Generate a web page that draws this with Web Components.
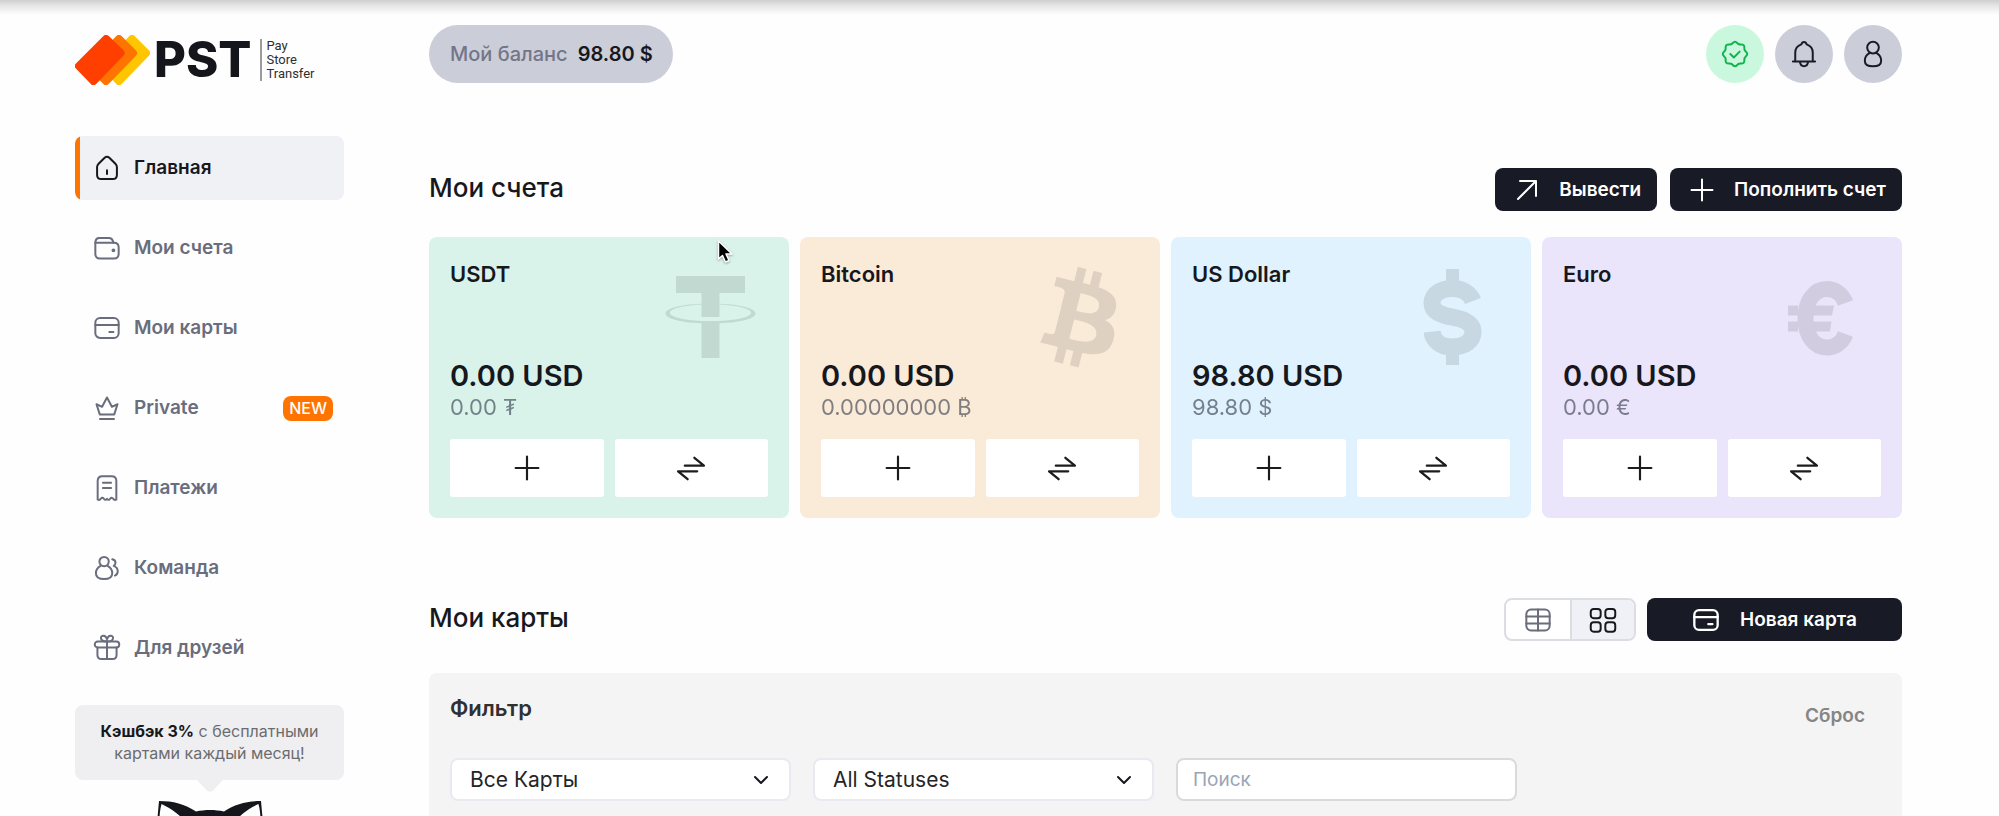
<!DOCTYPE html>
<html lang="ru">
<head>
<meta charset="utf-8">
<meta name="viewport" content="width=device-width, initial-scale=1">
<title>PST</title>
<style>
  html, body { margin: 0; }
  body { font-family: Inter, "Liberation Sans", sans-serif; color: #16181d; background: #fefefe; }
</style>
</head>
<body>
<pst-app></pst-app>

<script>
const ICONS = {
  home: '<path d="M3.5 11.2c0-1.2.5-2 1.3-2.8L10 3.200c1.200-1.100 2.800-1.100 4 0l5.200 5.200c.8.8 1.300 1.600 1.300 2.800V18c0 2-1.300 3.500-3.500 3.500H7c-2.200 0-3.500-1.500-3.500-3.500z"/><path d="M12 14v3.200"/>',
  wallet: '<path d="M2 7.500V17c0 2.500 1.500 4 4 4h12c2.500 0 4-1.500 4-4v-5.500c0-2.500-1.500-4-4-4z"/><path d="M2 7.500C2 5 3.300 3.500 5.500 3.500h8C15.700 3.500 17 5 17.500 7.500"/><circle cx="17.500" cy="14" r=".8" fill="currentColor"/>',
  card: '<rect x="2" y="3.500" width="20" height="17" rx="4"/><path d="M2 9.500h20M14 15.500h3.500"/>',
  crown: '<path d="M5.800 17.500 3 8.800l4.800 2.200L12 3l4.200 8L21 8.800l-2.800 8.700zM6 21.500h12"/>',
  receipt: '<path d="M4 22V6c0-2.500 1.500-4 4-4h8c2.500 0 4 1.500 4 4v16c-1.400.5-2 .3-2.700-.8-.8-1.200-1.800-1.200-2.600 0-.8 1.300-1.900 1.300-2.700 0-.8 1.300-1.900 1.300-2.700 0-.8-1.200-1.800-1.200-2.600 0C6 22.300 5.400 22.500 4 22zM8.500 7.500h7M8.500 12h7"/>',
  team: '<circle cx="9.500" cy="6.500" r="4"/><path d="M6.500 10.200C4 11.500 2.500 14 2.500 16.500 2.500 20 5 21.500 9.500 21.500s7-1.500 7-5c0-2.500-1.500-5-4-6.300"/><path d="M16.500 4.500c1.800.4 2.800 1.500 2.800 3 0 1.100-.5 2-1.500 2.700 2.300 1 3.400 2.600 3.400 4.500 0 2-.9 3.200-2.400 3.800"/>',
  gift: '<path d="M3.800 11.500V18c0 2.200 1.300 3.500 3.500 3.500h9.400c2.200 0 3.500-1.300 3.500-3.500v-6.500M12 6v15.500"/><rect x="1.500" y="6.500" width="21" height="5" rx="2.500"/><path d="M12 6.500C8 6.500 6.800 5 6.800 3.300 6.800 1 11 .5 12 4.500 13 .5 17.200 1 17.200 3.300 17.200 5 16 6.500 12 6.500z"/>',
  verified: '<path d="M12 1.500c1.500 0 2 1.600 3.400 2.100 1.400.5 2.900-.3 4 .8s.3 2.600.8 4c.5 1.400 2.300 2.100 2.300 3.600s-1.800 2.200-2.300 3.600c-.5 1.400.3 2.900-.8 4s-2.600.3-4 .8c-1.400.5-1.900 2.100-3.400 2.100s-2-1.600-3.400-2.100c-1.400-.5-2.900.3-4-.8s-.3-2.600-.8-4C3.300 14.200 1.500 13.500 1.500 12s1.800-2.200 2.300-3.600c.5-1.400-.3-2.900.8-4s2.600-.3 4-.8C10 3.100 10.500 1.500 12 1.500z"/><path d="m8 12 3 3 5-5"/>',
  bell: '<path d="M2.500 18.500h19M4.500 18.500V11c0-3.500 2.200-6.200 5.200-7.200.4-1.300 1.200-2.100 2.300-2.100s1.900.8 2.300 2.100c3 1 5.200 3.700 5.200 7.200v7.500M8.500 18.800c.3 2.300 1.500 3.700 3.500 3.700s3.200-1.400 3.500-3.700"/>',
  user: '<circle cx="12" cy="6.500" r="5"/><path d="M9 11.200C6.500 12.500 5 15 5 17.700c0 3.300 2 4.800 7 4.800s7-1.500 7-4.800c0-2.700-1.500-5.200-4-6.500"/>',
  plus: '<path d="M12 1.500v21M1.500 12h21"/>',
  out: '<path d="M3 21 21 3M5 3h16v15"/>',
  swap: '<path d="M6.500 9.500H23.500L15 2.500M17.500 14.500H.5L9 21.500"/>',
  table: '<rect x="2" y="3" width="20" height="18" rx="4"/><path d="M2 9h20M2 15h20M12 3v18"/>',
  grid: '<rect x="1.500" y="2.500" width="8.500" height="8" rx="2.500"/><rect x="14" y="2.500" width="8.500" height="8" rx="2.500"/><rect x="1.500" y="14" width="8.500" height="8" rx="2.500"/><rect x="14" y="14" width="8.500" height="8" rx="2.500"/>',
  chevron: '<path d="m6 9 6 6 6-6"/>'
};

const MARKS = {
  usdt: '<path d="M15 11h69v17H58.500v24h-18V28H15zM40.500 57.500h18V93h-18z"/><path fill-rule="evenodd" d="M49.500 38.500c25 0 45 4 45 10s-20 10-45 10-45-4-45-10 20-10 45-10zm0 1c-23 0-40.500 3.500-40.500 8.200s17.500 8.300 40.500 8.300S90 52.400 90 47.700 72.500 39.500 49.500 39.500z"/>',
  btc: '<path transform="translate(-33 -28.500) scale(5.050)" d="M23.189 14.020c.314-2.096-1.283-3.223-3.465-3.975l.708-2.840-1.728-.430-.690 2.765c-.454-.114-.920-.220-1.385-.326l.695-2.783L15.596 6l-.708 2.839c-.376-.086-.746-.170-1.104-.260l.002-.009-2.384-.595-.460 1.846s1.283.294 1.256.312c.700.175.826.638.805 1.006l-.806 3.235c.048.012.110.030.180.057l-.183-.045-1.130 4.532c-.086.212-.303.531-.793.410.018.025-1.256-.313-1.256-.313l-.858 1.978 2.250.561c.418.105.828.215 1.231.318l-.715 2.872 1.727.430.708-2.840c.472.127.930.245 1.378.357l-.706 2.828 1.728.430.715-2.866c2.948.558 5.164.333 6.097-2.333.752-2.146-.037-3.385-1.588-4.192 1.130-.260 1.980-1.003 2.207-2.538zm-3.950 5.538c-.533 2.147-4.148.986-5.320.695l.950-3.805c1.172.293 4.929.872 4.370 3.110zm.535-5.569c-.487 1.953-3.495.960-4.470.717l.860-3.450c.975.243 4.118.696 3.610 2.733z"/>',
  usd: '<path d="M43 4h13v13H43zM43 88h13v12H43z"/><path fill="none" stroke="#000" stroke-width="17" d="M70 36C67 28 59 23.500 49.500 23.500 37 23.500 29 29.500 29 38c0 9 9 12 20.500 14.200C62 54.500 70 58.500 70 67c0 9.500-9 15-20.500 15S30 76 29 66.700"/>',
  eur: '<path fill="none" stroke="#000" stroke-width="16" d="M71.500 38C68 28 60 24 53 24c-13 0-21.500 12-21.500 29.300S40 82.500 53 82.500c7 0 15-4 18.500-13.500"/><path d="M14 40.500h10v10H14zM39 40.500h21l-2 10H39zM14 56.500h10v10H14zM39 56.500h18.500l-1.500 10H39z"/>'
};

function define(name, css, html, setup, observed = []) {
  const template = document.createElement('template');
  template.innerHTML = `<style>*{box-sizing:border-box}${css}</style>${html}`;
  customElements.define(name, class extends HTMLElement {
    static observedAttributes = observed;
    constructor() {
      super();
      this.attachShadow({ mode: 'open' }).append(template.content.cloneNode(true));
    }
    connectedCallback() { if (setup) setup(this, this.shadowRoot); }
    attributeChangedCallback() { if (setup) setup(this, this.shadowRoot); }
  });
}

define('ui-icon',
  `:host{display:block;width:28px;height:28px;flex:none}
   svg{display:block;width:100%;height:100%;overflow:visible;fill:none;stroke:currentColor;stroke-width:var(--stroke,1.7);stroke-linecap:round;stroke-linejoin:round}`,
  `<svg viewBox="0 0 24 24" aria-hidden="true"></svg>`,
  (host, root) => { root.querySelector('svg').innerHTML = ICONS[host.getAttribute('name')] || ''; },
  ['name']);

define('pst-logo',
  `:host{display:block}
   a{display:flex;align-items:center;height:50px;color:inherit;text-decoration:none}
   svg{width:75px;height:50px;flex:none}
   b{margin-left:4px;font-size:49px;line-height:50px;font-weight:800;color:#14161b}
   span{margin-left:9px;padding-left:4px;border-left:2px solid #9b9b9d;font:13px/14px Roboto,sans-serif;color:#2e2e30}`,
  `<a href="#home"><svg viewBox="0 0 75 50" aria-hidden="true">
     <g stroke-width="8" stroke-linejoin="round">
     <path d="M57 4 71 18 44 46 30 32z" fill="#ffc600" stroke="#ffc600"/>
     <path d="M44 4 58 18 31 46 17 32z" fill="#ff7400" stroke="#ff7400"/>
     <path d="M31 4 45.500 18 18.500 46 4 31z" fill="#ff3f00" stroke="#ff3f00"/></g>
   </svg><b>PST</b><span>Pay<br>Store<br>Transfer</span></a>`);

define('nav-item',
  `:host{display:block}
   a{display:flex;align-items:center;height:64px;padding:0 11px 0 18px;border-radius:8px;color:#696d7c;font-size:19px;line-height:24px;font-weight:600;text-decoration:none}
   slot{display:block}
   .label{margin-left:13px;flex:1}
   :host([active]) a{background:linear-gradient(90deg,#ff7400 5px,#f0f1f5 5px);color:#16181d}`,
  `<a><ui-icon></ui-icon><span class="label"><slot></slot></span><slot name="badge"></slot></a>`,
  (host, root) => {
    root.querySelector('ui-icon').setAttribute('name', host.getAttribute('icon'));
    root.querySelector('a').href = '#' + host.getAttribute('icon');
  });

define('new-badge',
  `:host{display:block;padding:0 6px;border-radius:8px;background:#ff7400;color:#fff;font-size:16px;line-height:25px;font-weight:500}`,
  `<slot></slot>`);

define('promo-bubble',
  `:host{display:block;text-align:center}
   p{margin:0;padding:15px 8px 16px;border-radius:8px;background:#efeff1;color:#6c6c6e;font-size:16px;line-height:22px}
   ::slotted(b){color:#16181d;font-weight:700}
   svg{display:block;margin:0 auto}
   .fox{margin-top:9px}`,
  `<p><slot></slot></p>
   <svg width="26" height="12" viewBox="0 0 26 12" aria-hidden="true"><path d="M0 0h26l-9 9.500c-2.500 3-5.500 3-8 0z" fill="#efeff1"/></svg>
   <svg class="fox" width="106" height="56" viewBox="0 0 106 56" aria-hidden="true">
     <path d="M2 0C16 0 28 3 39 10.500 48 8.500 58 8.500 67 10.500 78 3 90 0 104 0l2 22v34H0V22z" fill="#14161b"/>
     <path d="M4.500 3C15 8 24 14 30 24L3 36C2 24 2 12 4.500 3zM101.500 3C91 8 82 14 76 24l27 12c1-12 1-24-1.500-33z" fill="#fefefe"/>
   </svg>`);

define('side-bar',
  `:host{display:block}
   nav{display:flex;flex-direction:column;gap:16px;margin:51px 0 25px}`,
  `<pst-logo></pst-logo>
   <nav>
     <nav-item icon="home" active>Главная</nav-item>
     <nav-item icon="wallet">Мои счета</nav-item>
     <nav-item icon="card">Мои карты</nav-item>
     <nav-item icon="crown">Private<new-badge slot="badge">NEW</new-badge></nav-item>
     <nav-item icon="receipt">Платежи</nav-item>
     <nav-item icon="team">Команда</nav-item>
     <nav-item icon="gift">Для друзей</nav-item>
   </nav>
   <promo-bubble><b>Кэшбэк 3%</b> с бесплатными<br>картами каждый месяц!</promo-bubble>`);

define('round-button',
  `:host{display:block}
   button{display:grid;place-items:center;width:58px;height:58px;padding:0;border:0;border-radius:50%;background:#cbcdd9;color:#1a1c24}
   :host([tone=ok]) button{background:#caf8df;color:#12b34c}
   ui-icon{width:28px;height:28px}`,
  `<button type="button"><ui-icon></ui-icon></button>`,
  (host, root) => {
    root.querySelector('ui-icon').setAttribute('name', host.getAttribute('icon'));
    root.querySelector('button').setAttribute('aria-label', host.getAttribute('label'));
  });

define('top-bar',
  `:host{display:flex;align-items:center;gap:11px;height:58px}
   .balance{display:flex;align-items:center;gap:10px;height:58px;margin-right:auto;padding:0 20px 0 21px;border:0;border-radius:29px;background:#cbcdd9;color:#737687;font:500 20px/24px Inter,sans-serif}
   b{color:#16181d;font-weight:600}`,
  `<button class="balance" type="button">Мой баланс <b>98.80 $</b></button>
   <round-button icon="verified" tone="ok" label="Верификация"></round-button>
   <round-button icon="bell" label="Уведомления"></round-button>
   <round-button icon="user" label="Профиль"></round-button>`);

define('dark-button',
  `:host{display:block}
   button{display:flex;align-items:center;justify-content:center;gap:20px;width:100%;height:43px;padding:0 16px 0 20px;border:0;border-radius:8px;background:#181b25;color:#fff;font:600 19px/24px Inter,sans-serif;white-space:nowrap}
   ui-icon{width:24px;height:24px;--stroke:2}
   :host([wide]) button{padding:0 44px}
   :host([wide]) ui-icon{width:28px;height:28px}`,
  `<button type="button"><ui-icon></ui-icon><slot></slot></button>`,
  (host, root) => { root.querySelector('ui-icon').setAttribute('name', host.getAttribute('icon')); });

define('section-head',
  `:host{display:flex;align-items:center;gap:13px}
   h2{margin:0 auto 0 0;padding-bottom:3px;font-size:26px;line-height:38px;font-weight:500}`,
  `<h2><slot></slot></h2><slot name="action"></slot>`);

define('account-card',
  `:host{display:block;position:relative;padding:21px;border-radius:8px;background:var(--tint)}
   h3{margin:0 0 69px;font-size:22px;line-height:32px;font-weight:600}
   .sum{display:block;font-size:29px;line-height:34px;font-weight:600}
   .own{display:block;margin:0 0 18px;font-size:22px;line-height:28px;color:#2f3546;opacity:.6}
   .actions{display:grid;grid-template-columns:1fr 1fr;gap:11px}
   button{display:grid;place-items:center;height:58px;padding:0;border:0;border-radius:3px;background:#fff;color:#1c1c1e;--stroke:2}
   .swap{width:30px;height:27px}
   .plus{width:26px;height:26px}
   .mark{position:absolute;top:28px;right:28px;width:100px;height:104px;opacity:.1}`,
  `<svg class="mark" viewBox="0 0 100 104" aria-hidden="true"></svg>
   <h3><slot></slot></h3>
   <span class="sum"><slot name="sum"></slot></span>
   <span class="own"><slot name="own"></slot></span>
   <div class="actions">
     <button type="button" aria-label="Пополнить"><ui-icon class="plus" name="plus"></ui-icon></button>
     <button type="button" aria-label="Обменять"><ui-icon class="swap" name="swap"></ui-icon></button>
   </div>`,
  (host, root) => { root.querySelector('.mark').innerHTML = MARKS[host.getAttribute('mark')]; });

define('view-toggle',
  `:host{display:grid;grid-template-columns:1fr 1fr;width:132px;height:43px;border:2px solid #dcdce2;border-radius:8px;background:#fff;overflow:hidden;margin-right:-2px}
   button{display:grid;place-items:center;padding:0;border:0;background:none;color:#696d7c}
   button+button{border-left:2px solid #dcdce2;background:#f0f1f6;color:#16181d}`,
  `<button type="button" aria-label="Таблица"><ui-icon name="table"></ui-icon></button>
   <button type="button" aria-label="Плитка" aria-pressed="true"><ui-icon name="grid"></ui-icon></button>`);

define('filter-panel',
  `:host{display:block;padding:21px 37px 60px 21px;border-radius:8px;background:#f4f4f4}
   header{display:flex;align-items:flex-end;justify-content:space-between;height:36px}
   h3{align-self:flex-start;margin:0;font-size:22px;line-height:28px;font-weight:600;color:#303032}
   .reset{padding:0;border:0;background:none;color:#858585;font:600 19px/28px Inter,sans-serif}
   form{display:grid;grid-template-columns:repeat(3,minmax(0,341px));gap:22px;margin-top:28px}
   .field{display:grid;align-items:center}
   .field>*{grid-area:1/1}
   .field ui-icon{justify-self:end;margin-right:18px;pointer-events:none;--stroke:2}
   select,input{width:100%;height:43px;padding:0 18px;border:2px solid #e9e9f0;border-radius:8px;background:#fff;color:#232529;font:21px/24px Inter,sans-serif;appearance:none}
   input{padding:0 15px;border-color:#dadade;font-size:19px}
   input::placeholder{color:#9aa5b5;opacity:1}
   ui-icon{width:24px;height:24px}`,
  `<header><h3>Фильтр</h3><button class="reset" type="button">Сброс</button></header>
   <form>
     <label class="field"><select aria-label="Карты"><option>Все Карты</option></select><ui-icon name="chevron"></ui-icon></label>
     <label class="field"><select aria-label="Статус"><option>All Statuses</option></select><ui-icon name="chevron"></ui-icon></label>
     <label class="field"><input type="search" placeholder="Поиск" aria-label="Поиск"></label>
   </form>`);

define('mouse-pointer',
  `:host{position:absolute;left:717px;top:240px;width:18px;height:24px}svg{display:block;filter:drop-shadow(0 1px 1px #0005)}`,
  `<svg width="18" height="24" viewBox="0 0 18 24" aria-hidden="true"><path d="M1.500 1v18l4-3.500 3 6.500 3.500-1.500-3-6.500h6z" fill="#000" stroke="#fff" stroke-width="1.500" stroke-linejoin="round"/></svg>`);

define('pst-app',
  `:host{display:grid;grid-template-columns:269px minmax(0,1fr);column-gap:85px;position:relative;height:100vh;overflow:hidden;padding:25px 97px 0 75px;background:linear-gradient(#cfcfcf,#e6e6e6 6px,#fefefe 15px)}
   side-bar{margin-top:10px}
   .accounts{margin-top:85px}
   .grid{display:grid;grid-template-columns:repeat(4,minmax(0,1fr));gap:11px;margin-top:26px}
   .cards{margin-top:80px}
   filter-panel{margin-top:32px}
   .new{width:255px}`,
  `<side-bar></side-bar>
   <main>
     <top-bar></top-bar>
     <section-head class="accounts">Мои счета
       <dark-button slot="action" icon="out">Вывести</dark-button>
       <dark-button slot="action" icon="plus">Пополнить счет</dark-button>
     </section-head>
     <div class="grid">
       <account-card mark="usdt" style="--tint:#d9f3ea">USDT<span slot="sum">0.00 USD</span><span slot="own">0.00 ₮</span></account-card>
       <account-card mark="btc" style="--tint:#faead8">Bitcoin<span slot="sum">0.00 USD</span><span slot="own">0.00000000 ₿</span></account-card>
       <account-card mark="usd" style="--tint:#dff2fe">US Dollar<span slot="sum">98.80 USD</span><span slot="own">98.80 $</span></account-card>
       <account-card mark="eur" style="--tint:#ebe5fb">Euro<span slot="sum">0.00 USD</span><span slot="own">0.00 €</span></account-card>
     </div>
     <section-head class="cards">Мои карты
       <view-toggle slot="action"></view-toggle>
       <dark-button class="new" slot="action" icon="card" wide>Новая карта</dark-button>
     </section-head>
     <filter-panel></filter-panel>
   </main>
   <mouse-pointer></mouse-pointer>`);
</script>
</body>
</html>
